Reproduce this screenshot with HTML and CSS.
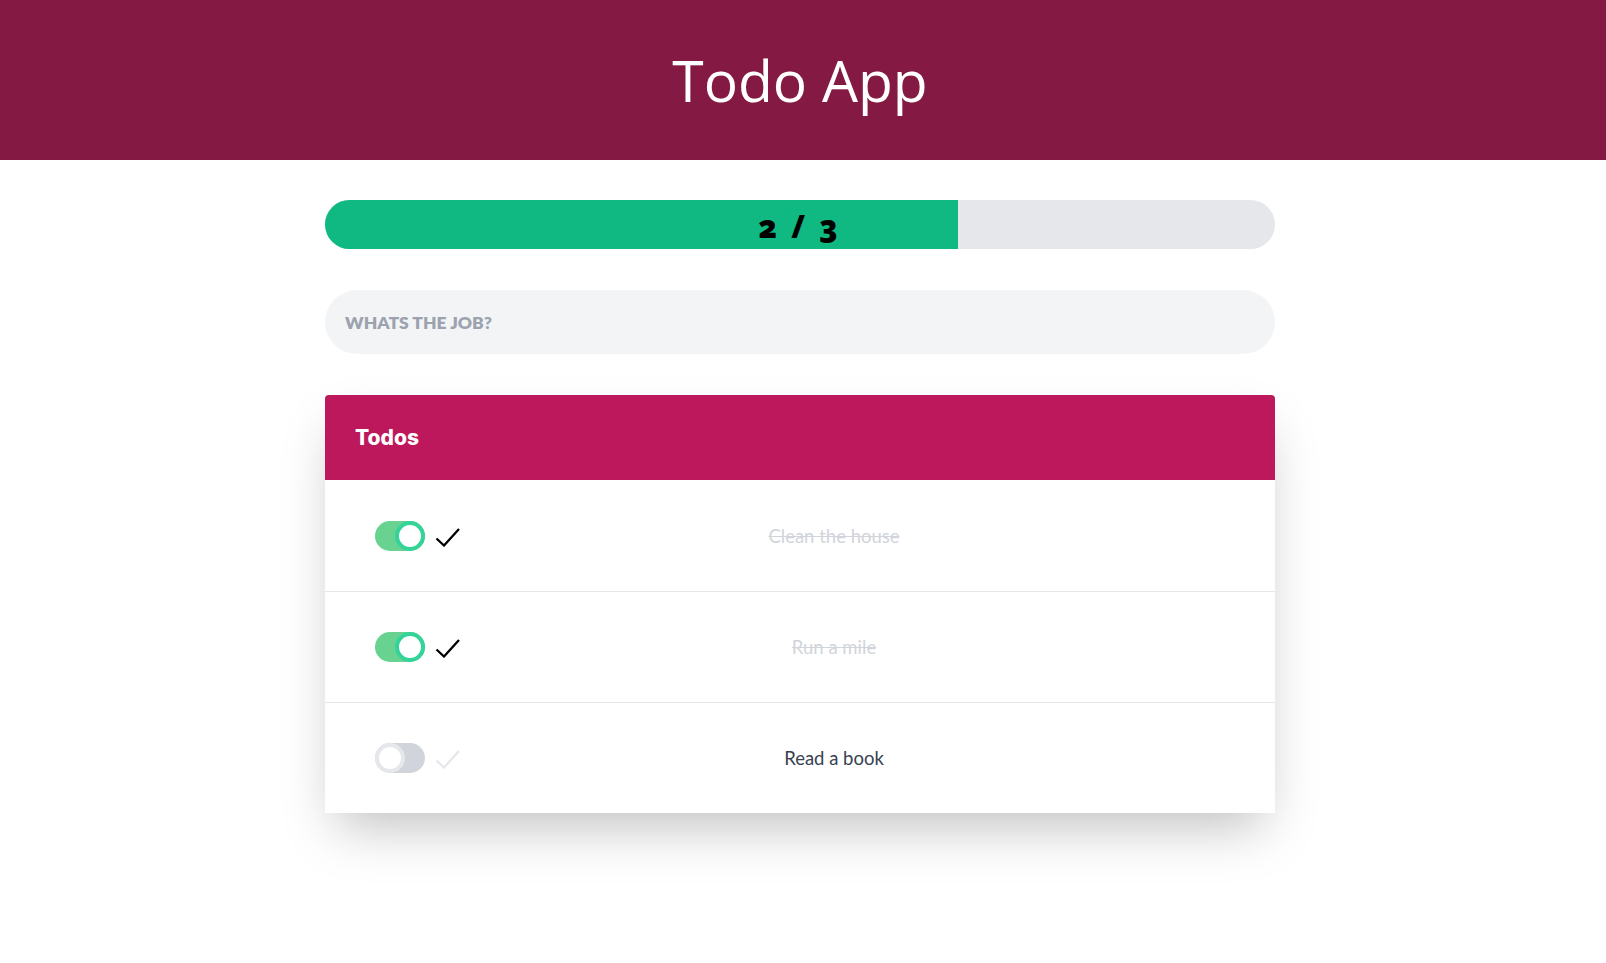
FILE: index.html
```html
<!DOCTYPE html>
<html lang="en">
<head>
<meta charset="utf-8">
<title>Todo App</title>
<link rel="stylesheet" href="styles.css">
</head>
<body>
<header class="top">
  <h1 class="title">Todo App</h1>
</header>
<main class="main">
  <div class="progress">
    <div class="progress-fill" style="width: 66.6667%"></div>
    <span class="progress-label">2 / 3</span>
  </div>
  <input class="job-input" type="text" placeholder="WHATS THE JOB?">
  <section class="card">
    <div class="card-head">Todos</div>
    <div class="row">
      <div class="controls">
        <span class="toggle on"><span class="knob"></span></span>
        <svg class="check done" width="26" height="20" viewBox="0 0 26 20"><polyline points="1.5,11.5 9,18.5 24,2" fill="none" stroke="currentColor" stroke-width="2.3"/></svg>
      </div>
      <span class="text done">Clean the house</span>
    </div>
    <div class="row">
      <div class="controls">
        <span class="toggle on"><span class="knob"></span></span>
        <svg class="check done" width="26" height="20" viewBox="0 0 26 20"><polyline points="1.5,11.5 9,18.5 24,2" fill="none" stroke="currentColor" stroke-width="2.3"/></svg>
      </div>
      <span class="text done">Run a mile</span>
    </div>
    <div class="row">
      <div class="controls">
        <span class="toggle"><span class="knob"></span></span>
        <svg class="check" width="26" height="20" viewBox="0 0 26 20"><polyline points="1.5,11.5 9,18.5 24,2" fill="none" stroke="currentColor" stroke-width="2.3"/></svg>
      </div>
      <span class="text">Read a book</span>
    </div>
  </section>
</main>
</body>
</html>
```
FILE: styles.css
```css
* { box-sizing: border-box; }
html, body { margin: 0; padding: 0; background: #fff; }
body { font-family: "Lato", "Open Sans", sans-serif; min-height: 963px; }

.top {
  height: 160px;
  background: #841943;
  display: flex;
  align-items: center;
  justify-content: center;
  padding-right: 6px;
}
.title {
  margin: 0;
  font-family: "Open Sans", sans-serif;
  font-weight: 400;
  font-size: 57px;
  color: #fff;
  line-height: 1;
}

.main {
  width: 950px;
  margin: 40px auto 0;
  padding-bottom: 120px;
  position: relative;
  left: -3px;
  display: flex;
  flex-direction: column;
}

.progress {
  position: relative;
  height: 49px;
  border-radius: 25px;
  background: #e5e7eb;
  overflow: hidden;
  display: flex;
  align-items: center;
  justify-content: center;
}
.progress-fill {
  position: absolute;
  left: 0; top: 0; bottom: 0;
  background: #10b981;
}
.progress-label {
  position: relative;
  font-family: "Open Sans", sans-serif;
  font-weight: 800;
  font-size: 31px;
  color: #000;
  letter-spacing: 4px;
  word-spacing: -2px;
  font-variant-numeric: oldstyle-nums;
  font-feature-settings: "onum" 1;
  margin-top: 2px;
}

.job-input {
  margin-top: 41px;
  height: 64px;
  border: none;
  outline: none;
  border-radius: 32px;
  background: #f3f4f6;
  padding: 0 20px;
  font-family: "Lato", sans-serif;
  font-weight: 800;
  font-size: 17.5px;
  color: #374151;
}
.job-input::placeholder { color: #9ca3af; opacity: 1; }

.card {
  margin-top: 41px;
  background: #fff;
  border-radius: 4px 4px 0 0;
  box-shadow: 0 25px 50px -12px rgba(0,0,0,0.25);
}
.card-head {
  height: 85px;
  background: #be185d;
  border-radius: 4px 4px 0 0;
  color: #fff;
  font-family: "Inter", sans-serif;
  font-weight: 800;
  font-size: 21px;
  display: flex;
  align-items: center;
  padding-left: 30px;
}

.row {
  height: 111px;
  display: flex;
  align-items: center;
  padding: 0 68px 0 50px;
}
.row + .row { border-top: 1px solid #e5e7eb; }

.controls {
  display: flex;
  align-items: center;
  gap: 10px;
}
.toggle {
  position: relative;
  width: 50px;
  height: 30px;
  border-radius: 15px;
  background: #d1d5db;
  display: block;
}
.toggle .knob {
  position: absolute;
  top: 0; left: 0;
  width: 30px;
  height: 30px;
  border-radius: 50%;
  background: #fff;
  border: 4px solid #e5e7eb;
}
.toggle.on { background: #68d391; }
.toggle.on .knob { left: 20px; border-color: #34d399; }

.check { display: block; color: #e5e7eb; margin-top: 2px; }
.check.done { color: #000; }

.text {
  flex: 1;
  text-align: center;
  font-family: "Lato", sans-serif;
  font-size: 18.5px;
  color: #374151;
}
.text.done { color: #d1d5db; text-decoration: line-through; }
```
